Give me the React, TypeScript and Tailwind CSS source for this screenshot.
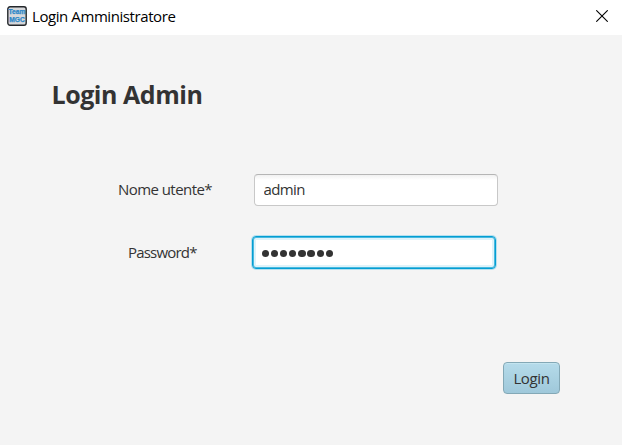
import React, { useState } from "react";

function TeamIcon() {
  return (
    <svg width="20" height="20" viewBox="0 0 20 20" className="shrink-0">
      <rect x="0.8" y="0.8" width="18.4" height="18.4" rx="2.2" fill="#d6d8db" stroke="#24272b" strokeWidth="1.4" />
      <g fill="#2a86c8" stroke="#2a86c8" strokeWidth="0.25" fontFamily="'Liberation Sans', Arial, sans-serif" fontWeight="700" textAnchor="middle">
        <text x="10" y="8.3" fontSize="6.6" textLength="17" lengthAdjust="spacingAndGlyphs">Team</text>
        <text x="10" y="16.4" fontSize="6.8" textLength="15.5" lengthAdjust="spacingAndGlyphs">MGC</text>
      </g>
    </svg>
  );
}

function TitleBar() {
  return (
    <header className="flex h-[35px] items-start bg-white pl-[7px] pr-[14px] pt-[6px] text-black">
      <TeamIcon />
      <span className="ml-[5px] grow whitespace-nowrap text-[15px] leading-5 tracking-[-0.42px]">Login Amministratore</span>
      <button aria-label="Close" className="mt-[4px]">
        <svg width="12" height="12" viewBox="0 0 12 12" className="block" stroke="#000" strokeWidth="1.1">
          <path d="M0.3 0.3 11.7 11.7M11.7 0.3 0.3 11.7" />
        </svg>
      </button>
    </header>
  );
}

export default function App() {
  const [user, setUser] = useState("admin");
  return (
    <div className="flex h-[445px] w-[622px] flex-col overflow-hidden bg-[#f4f4f4] font-['Open_Sans','Noto_Sans',sans-serif] text-[15px] text-[#333]">
      <TitleBar />
      <main className="flex grow flex-col">
        <h1 className="ml-[51.5px] mt-[41px] h-9 whitespace-nowrap text-[25px] font-bold leading-9 tracking-[-0.46px]">Login Admin</h1>
        <div className="mt-[62px] flex h-8 items-center">
          <label className="ml-[118px] w-[136px] whitespace-nowrap pb-0.5 tracking-[-0.56px]">Nome utente*</label>
          <input
            value={user}
            onChange={(e) => setUser(e.target.value)}
            className="h-8 w-[244px] rounded-[4px] border border-[#c8c8c8] border-t-[#b5b5b5] bg-linear-to-b from-[#f1f1f1] to-white to-[5px] pb-0.5 pl-[8.5px] tracking-[-0.6px] outline-none"
          />
        </div>
        <div className="mt-[30px] flex h-[33px] items-center">
          <label className="ml-[128px] w-[123.5px] whitespace-nowrap tracking-[-0.8px]">Password*</label>
          <div className="flex h-[33px] w-[244.5px] items-center gap-[1.8px] rounded-[4px] border border-[#039ed3] bg-white pl-[9px] shadow-[0_0_0_1px_#b5e0ef,inset_0_0_0_1px_#49b9df,inset_0_0_0_3px_#def3fa]">
            {Array.from({ length: 8 }, (_, i) => (
              <span key={i} className="mt-[2px] size-[7.4px] rounded-full bg-[#333]" />
            ))}
          </div>
        </div>
        <button className="ml-[503px] mt-[93px] h-8 w-[57px] rounded-[4px] border border-[#83a8b6] bg-linear-to-b from-[#b5dbea] to-[#9fc8da] tracking-[-0.35px] shadow-[inset_0_1px_0_#c3e4ef]">
          Login
        </button>
      </main>
    </div>
  );
}
